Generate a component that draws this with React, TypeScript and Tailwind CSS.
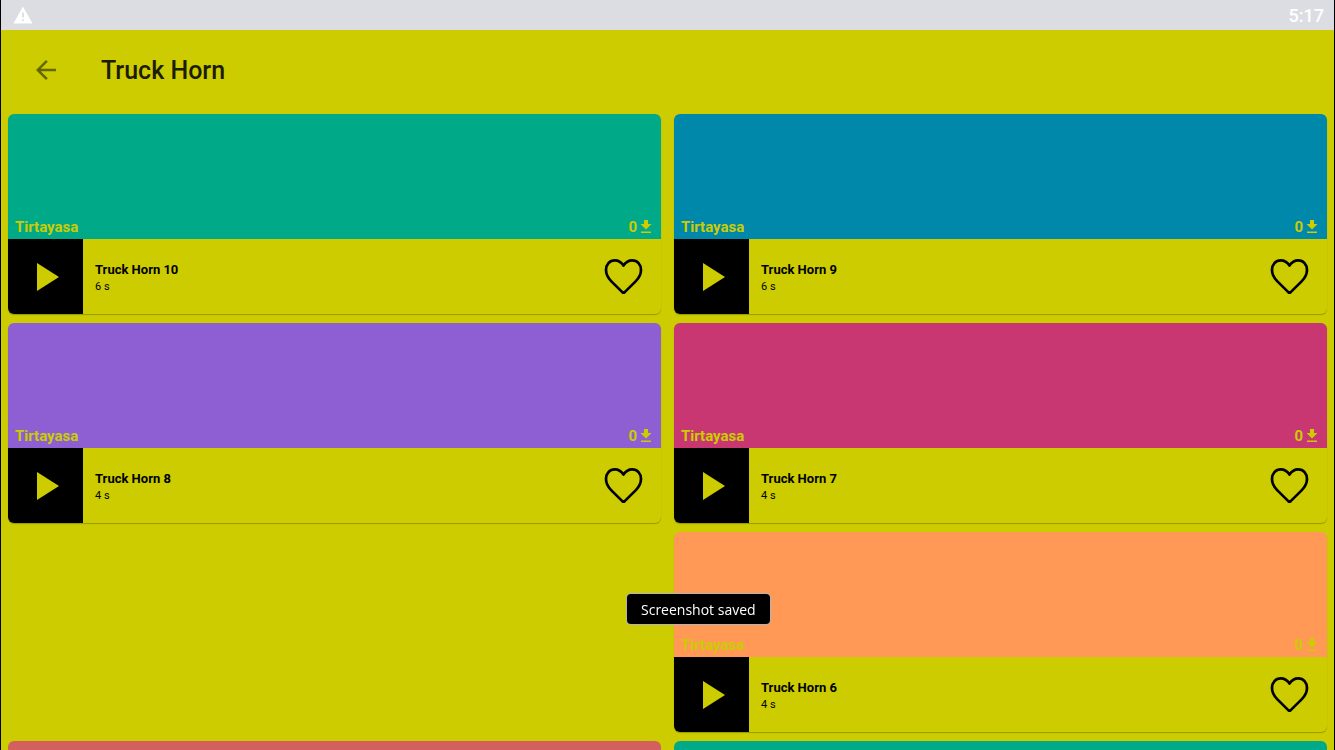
import { useState } from "react";

type Sound = { id: number; title: string; seconds: number; color: string };

const sounds: (Sound | null)[] = [
  { id: 10, title: "Truck Horn 10", seconds: 6, color: "bg-[#00aa88]" },
  { id: 9, title: "Truck Horn 9", seconds: 6, color: "bg-[#0088aa]" },
  { id: 8, title: "Truck Horn 8", seconds: 4, color: "bg-[#8d5fd3]" },
  { id: 7, title: "Truck Horn 7", seconds: 4, color: "bg-[#c83771]" },
  null,
  { id: 6, title: "Truck Horn 6", seconds: 4, color: "bg-[#ff9955]" },
];

const pendingCovers = ["bg-[#d35f5f]", "bg-[#00aa88]"];

function StatusBar() {
  return (
    <div className="flex h-[30px] shrink-0 items-center justify-between bg-[#dcdde3] pr-2.5 pl-3 text-white">
      <svg viewBox="0 0 20 18" className="h-[18px] w-5" aria-label="Warning" role="img">
        <path d="M10 0.5 19.5 17.5H0.5Z" fill="currentColor" />
        <path d="M9.1 6.5h1.8v5H9.1zM9.1 13.2h1.8V15H9.1z" fill="#dcdde3" />
      </svg>
      <span className="pt-0.5 text-[18px] leading-6 font-medium">5:17</span>
    </div>
  );
}

function SoundCard({ sound }: { sound: Sound }) {
  const [liked, setLiked] = useState(false);
  return (
    <article className="overflow-hidden rounded-md bg-[#cccc00] shadow-[0_1px_1px_rgba(0,0,0,0.25)]">
      <div
        className={`flex h-[125px] items-end justify-between pr-2 pl-[7px] text-[15px] leading-5 font-bold text-[#cccc00] ${sound.color}`}
      >
        <span className="pb-0.5">Tirtayasa</span>
        <span className="flex items-center gap-0.5 pb-0.5">
          0
          <svg viewBox="0 0 14 16" className="mb-[3px] h-4 w-3.5" aria-hidden="true">
            <path d="M5 2h4v4h3.500L7 11.500 1.500 6H5zM2 13.500h10V15H2z" fill="currentColor" />
          </svg>
        </span>
      </div>
      <div className="flex h-[75px] items-center">
        <button
          type="button"
          aria-label={`Play ${sound.title}`}
          className="flex h-[75px] w-[75px] shrink-0 items-center justify-center bg-black pl-1"
        >
          <svg viewBox="0 0 24 30" className="h-[30px] w-6" aria-hidden="true">
            <path d="M1 1v28l22-14z" fill="#cccc00" />
          </svg>
        </button>
        <div className="min-w-0 flex-1 pt-0.5 pl-3 text-black">
          <h2 className="text-[13px] leading-[18px] font-bold">{sound.title}</h2>
          <p className="text-[11px] leading-4">{sound.seconds} s</p>
        </div>
        <button
          type="button"
          aria-label={`Like ${sound.title}`}
          aria-pressed={liked}
          onClick={() => setLiked(!liked)}
          className="mr-[18px] shrink-0"
        >
          <svg viewBox="0 0 40 38" className="h-[38px] w-10" aria-hidden="true">
            <path
              d="M20.500 7.600C18 3.800 15 2.400 11.800 2.400 6.600 2.400 3 6.600 3 12c0 4.600 2 8 5.400 11.400L19.300 34.100q1.200 1 2.400 0L32.600 23.400c3.400-3.400 5.400-6.800 5.400-11.400 0-5.400-3.600-9.600-8.800-9.600-3.200 0-6.200 1.400-8.700 5.200Z"
              fill={liked ? "black" : "none"}
              stroke="black"
              strokeWidth="2.7"
              strokeLinejoin="round"
            />
          </svg>
        </button>
      </div>
    </article>
  );
}

export default function App() {
  return (
    <div className="flex h-screen flex-col overflow-hidden border-x border-black bg-[#cccc00] font-['Roboto','Liberation_Sans',sans-serif]">
      <StatusBar />
      <header className="flex h-[84px] shrink-0 items-center pb-1 pl-[30px]">
        <button type="button" aria-label="Back" className="mr-10 text-[#666600]">
          <svg viewBox="0 0 24 24" className="h-[30px] w-[30px]" aria-hidden="true">
            <path
              d="M20 11H7.830l5.590-5.590L12 4l-8 8 8 8 1.410-1.410L7.830 13H20z"
              fill="currentColor"
            />
          </svg>
        </button>
        <h1 className="pt-0.5 text-[25px] leading-8 font-medium text-[#1c1c00]">Truck Horn</h1>
      </header>
      <main className="grid min-h-0 flex-1 auto-rows-max grid-cols-2 gap-x-[13px] gap-y-[9px] overflow-y-auto px-[7px] [scrollbar-width:none]">
        {sounds.map((sound, index) =>
          sound ? <SoundCard key={sound.id} sound={sound} /> : <div key={`empty-${index}`} />,
        )}
        {pendingCovers.map((cover) => (
          <div key={cover} className={`h-[125px] rounded-t-md ${cover}`} />
        ))}
      </main>
      <div
        role="status"
        className="fixed bottom-[125px] left-[626px] rounded-[5px] border border-white/70 bg-black px-3.5 pt-[5px] pb-[3px] font-['Open_Sans','Noto_Sans',sans-serif] text-[14px] leading-[22px] text-white"
      >
        Screenshot saved
      </div>
    </div>
  );
}
